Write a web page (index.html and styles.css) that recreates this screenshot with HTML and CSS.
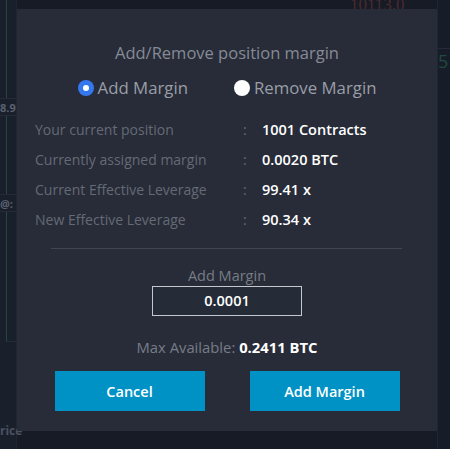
FILE: index.html
```html
<!DOCTYPE html>
<html>
<head>
<meta charset="utf-8">
<link rel="stylesheet" href="styles.css">
</head>
<body>
<div class="app">
  <div class="bg-left">
    <div class="bg-chart"></div>
    <div class="bg-tag">8.9</div>
    <div class="bg-chart short"></div>
    <div class="bg-tag">@:</div>
    <div class="bg-chart tall"></div>
    <div class="bg-foot">rice</div>
  </div>
  <div class="bg-right">
    <div class="bg-price">10113.0</div>
    <div class="bg-green">5</div>
  </div>

  <div class="modal">
    <h2 class="title">Add/Remove position margin</h2>
    <div class="radios">
      <label class="radio"><span class="dot on"></span>Add Margin</label>
      <label class="radio"><span class="dot"></span>Remove Margin</label>
    </div>
    <div class="info">
      <span class="lbl">Your current position</span><span class="colon">:</span><span class="val">1001 Contracts</span>
      <span class="lbl">Currently assigned margin</span><span class="colon">:</span><span class="val">0.0020 BTC</span>
      <span class="lbl">Current Effective Leverage</span><span class="colon">:</span><span class="val">99.41 x</span>
      <span class="lbl">New Effective Leverage</span><span class="colon">:</span><span class="val">90.34 x</span>
    </div>
    <div class="divider"></div>
    <div class="field-label">Add Margin</div>
    <div class="input">0.0001</div>
    <div class="max">Max Available: <b>0.2411 BTC</b></div>
    <div class="buttons">
      <button class="btn">Cancel</button>
      <button class="btn">Add Margin</button>
    </div>
  </div>
</div>
</body>
</html>
```

FILE: styles.css
```css
* { box-sizing: border-box; }
html, body { margin: 0; padding: 0; }
body {
  width: 450px;
  height: 449px;
  background: #161b25;
  font-family: "Open Sans", "Lato", sans-serif;
  overflow: hidden;
}
.app {
  position: relative;
  width: 450px;
  height: 449px;
  display: flex;
  justify-content: space-between;
}
.bg-left {
  width: 17px;
  display: flex;
  flex-direction: column;
  background: #19202b;
  border-right: 1px solid #1f2632;
}
.bg-chart {
  height: 98px;
  border-left: 1px solid #1e4a3c;
  margin-left: 6px;
}
.bg-chart.short { height: 78px; }
.bg-chart.tall { height: 130px; border-bottom: 1px solid #242b36; }
.bg-tag {
  font-size: 11px;
  font-weight: 700;
  color: #5a6170;
  height: 18px;
  line-height: 18px;
  border-top: 1px solid #242b36;
  border-bottom: 1px solid #242b36;
  white-space: nowrap;
}
.bg-foot {
  margin-top: 80px;
  font-size: 12px;
  font-weight: 700;
  color: #4a5160;
  white-space: nowrap;
}
.bg-right {
  width: 13px;
  display: flex;
  flex-direction: column;
  border-left: 1px solid #202734;
  background: #171d28;
}
.bg-price {
  font-family: "Liberation Serif", serif;
  color: #4a2a30;
  font-size: 17px;
  line-height: 10px;
  margin-left: -88px;
  height: 48px;
  white-space: nowrap;
}
.bg-green {
  color: #1f4a3e;
  font-size: 18px;
  height: 76px;
  border-top: 1px solid #252c38;
}

.modal {
  position: absolute;
  left: 17px;
  top: 9px;
  width: 420px;
  height: 422px;
  background: #272c38;
  display: flex;
  flex-direction: column;
  align-items: center;
  padding: 34px 18px 20px;
}
.title {
  margin: 0;
  font-size: 16.5px;
  font-weight: 400;
  line-height: 20px;
  color: #868b96;
}
.radios {
  margin-top: 15px;
  display: flex;
  gap: 46px;
  height: 20px;
  align-items: center;
}
.radio {
  display: flex;
  align-items: center;
  gap: 4px;
  font-size: 16.8px;
  color: #9a9ea7;
  line-height: 20px;
}
.dot {
  width: 16px;
  height: 16px;
  border-radius: 50%;
  background: #ffffff;
  display: flex;
  align-items: center;
  justify-content: center;
}
.dot.on { background: #3478f0; }
.dot.on::after {
  content: "";
  width: 6px;
  height: 6px;
  border-radius: 50%;
  background: #ffffff;
}
.info {
  margin-top: 16px;
  align-self: stretch;
  display: grid;
  grid-template-columns: 208px 19px 1fr;
  grid-auto-rows: 30px;
  align-items: center;
  font-size: 14px;
}
.lbl { color: #656a75; }
.colon { color: #656a75; }
.val { color: #ffffff; font-weight: 600; font-size: 14.5px; }
.divider {
  margin-top: 14px;
  align-self: stretch;
  margin-left: 16px;
  margin-right: 17px;
  height: 1px;
  background: #40454f;
}
.field-label {
  margin-top: 19px;
  font-size: 14.5px;
  line-height: 16px;
  color: #777c86;
}
.input {
  margin-top: 2px;
  width: 150px;
  height: 32px;
  border: 1px solid #c3c7ce;
  background: #252b37;
  color: #ffffff;
  font-size: 14.5px;
  font-weight: 600;
  display: flex;
  align-items: center;
  justify-content: center;
}
.max {
  margin-top: 22px;
  font-size: 14.8px;
  line-height: 18px;
  color: #777c86;
}
.max b { color: #ffffff; font-weight: 700; }
.buttons {
  margin-top: 15px;
  display: flex;
  gap: 45px;
}
.btn {
  width: 150px;
  height: 40px;
  border: 0;
  background: #0092c5;
  color: #ffffff;
  font-family: inherit;
  font-size: 14.5px;
  font-weight: 600;
}
```
